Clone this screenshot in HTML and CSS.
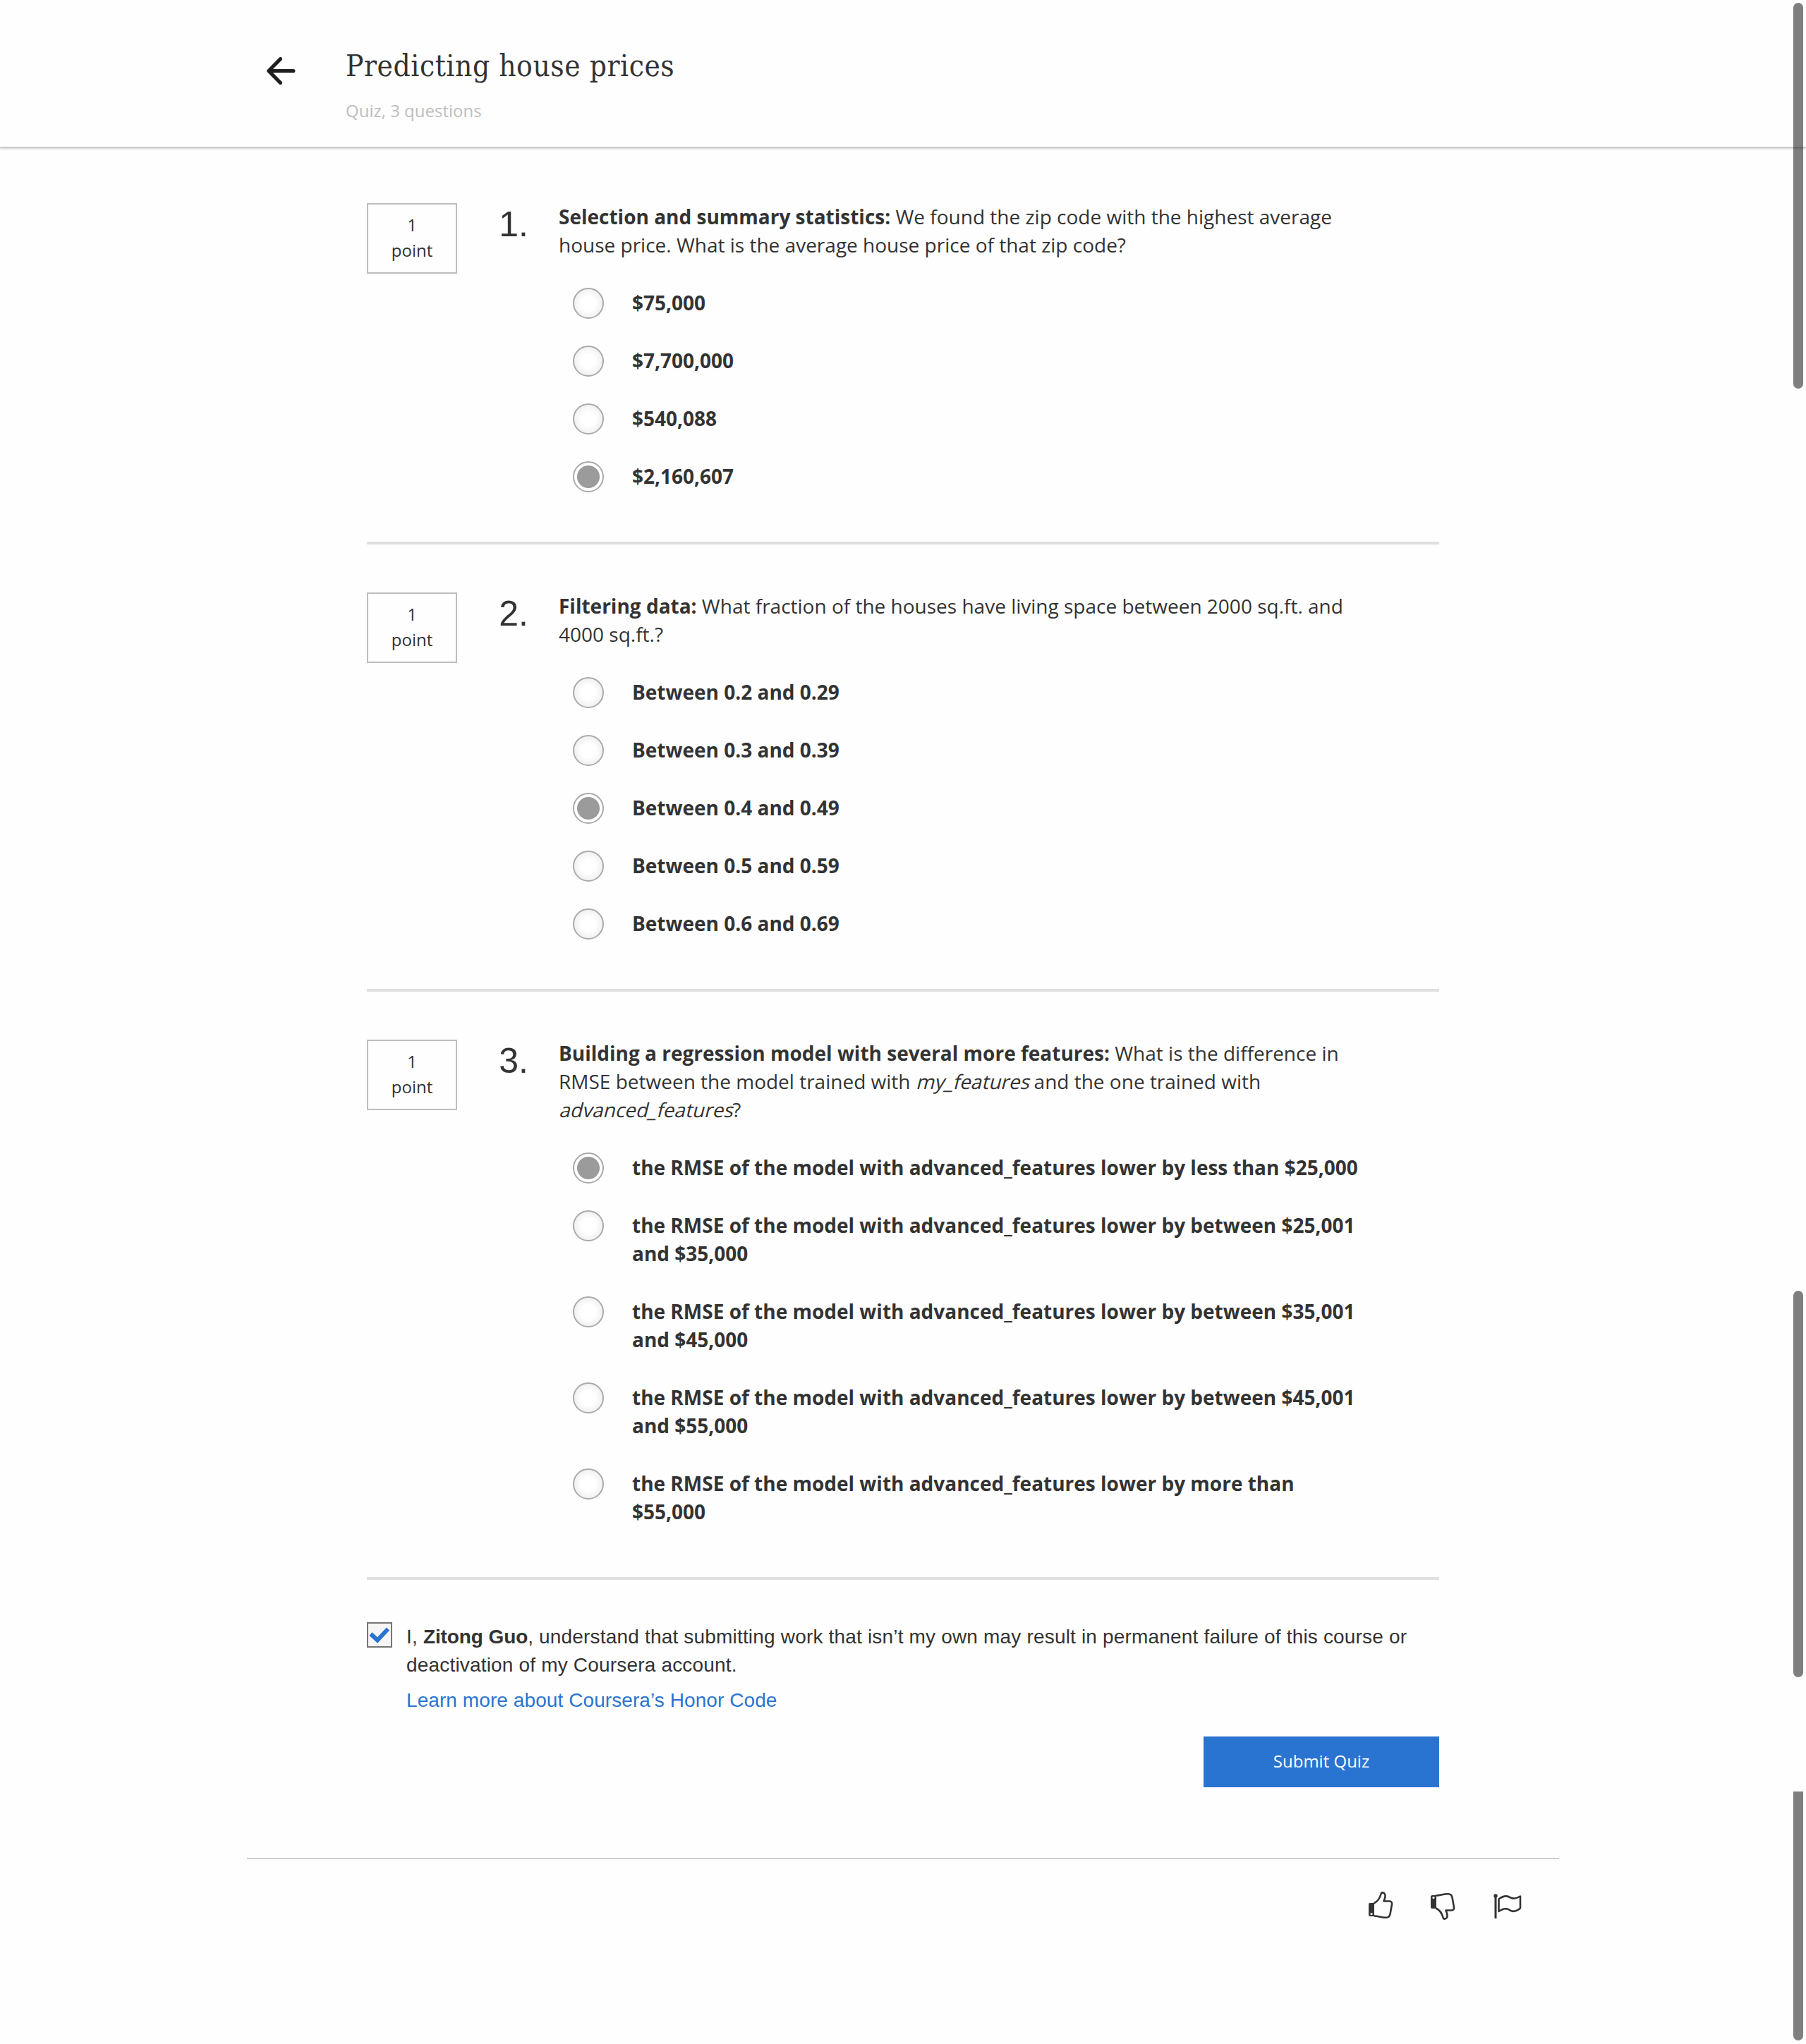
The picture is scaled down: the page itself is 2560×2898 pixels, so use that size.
FILE: index.html
```html
<!DOCTYPE html>
<html lang="en">
<head>
<meta charset="utf-8">
<title>Predicting house prices</title>
<link rel="stylesheet" href="styles.css">
</head>
<body>
<header class="header">
  <svg class="back" viewBox="0 0 40 38" fill="none" stroke="#1f1f1f" stroke-width="5" stroke-linecap="round" stroke-linejoin="round"><path d="M19 2.5 2.8 19 19 35.5M3 19H37"/></svg>
  <div>
    <h1 class="title">Predicting house prices</h1>
    <p class="subtitle">Quiz, 3 questions</p>
  </div>
</header>
<main class="quiz">
  <section class="question">
    <div class="points">1<br>point</div>
    <div class="number">1.</div>
    <div class="body">
      <p class="prompt"><b>Selection and summary statistics:</b> We found the zip code with the highest average<br>house price. What is the average house price of that zip code?</p>
      <ul class="options">
        <li class="option"><span class="radio"></span><span class="label">$75,000</span></li>
        <li class="option"><span class="radio"></span><span class="label">$7,700,000</span></li>
        <li class="option"><span class="radio"></span><span class="label">$540,088</span></li>
        <li class="option"><span class="radio checked"></span><span class="label">$2,160,607</span></li>
      </ul>
    </div>
  </section>
  <section class="question">
    <div class="points">1<br>point</div>
    <div class="number">2.</div>
    <div class="body">
      <p class="prompt"><b>Filtering data:</b> What fraction of the houses have living space between 2000 sq.ft. and<br>4000 sq.ft.?</p>
      <ul class="options">
        <li class="option"><span class="radio"></span><span class="label">Between 0.2 and 0.29</span></li>
        <li class="option"><span class="radio"></span><span class="label">Between 0.3 and 0.39</span></li>
        <li class="option"><span class="radio checked"></span><span class="label">Between 0.4 and 0.49</span></li>
        <li class="option"><span class="radio"></span><span class="label">Between 0.5 and 0.59</span></li>
        <li class="option"><span class="radio"></span><span class="label">Between 0.6 and 0.69</span></li>
      </ul>
    </div>
  </section>
  <section class="question">
    <div class="points">1<br>point</div>
    <div class="number">3.</div>
    <div class="body">
      <p class="prompt"><b>Building a regression model with several more features:</b> What is the difference in<br>RMSE between the model trained with <i>my_features</i> and the one trained with<br><i>advanced_features</i>?</p>
      <ul class="options">
        <li class="option"><span class="radio checked"></span><span class="label">the RMSE of the model with advanced_features lower by less than $25,000</span></li>
        <li class="option"><span class="radio"></span><span class="label">the RMSE of the model with advanced_features lower by between $25,001<br>and $35,000</span></li>
        <li class="option"><span class="radio"></span><span class="label">the RMSE of the model with advanced_features lower by between $35,001<br>and $45,000</span></li>
        <li class="option"><span class="radio"></span><span class="label">the RMSE of the model with advanced_features lower by between $45,001<br>and $55,000</span></li>
        <li class="option"><span class="radio"></span><span class="label">the RMSE of the model with advanced_features lower by more than<br>$55,000</span></li>
      </ul>
    </div>
  </section>
  <section class="honor">
    <span class="checkbox"><svg viewBox="0 0 32 32" fill="none" stroke="#2a74d1" stroke-width="6"><path d="M3.5 14.5 13 23.500 28 7.500"/></svg></span>
    <div class="pledge">
      <p>I, <b>Zitong Guo</b>, understand that submitting work that isn’t my own may result in permanent failure of this course or<br>deactivation of my Coursera account.</p>
      <a class="link">Learn more about Coursera’s Honor Code</a>
    </div>
  </section>
  <button class="submit">Submit Quiz</button>
</main>
<footer class="footer">
  <svg class="icon" viewBox="0 0 40 40"><use href="#thumb"/></svg>
  <svg class="icon down" viewBox="0 0 40 40"><g id="thumb"><path d="M10 18H4Q2 18 2 20V34.500Q2 37 4.500 37H10Z" fill="#333"/><circle cx="6" cy="33.500" r="1.600" fill="#fff"/><path d="M9.500 18.500C15 16 18 11 19.500 5.500C20 3 22 2.800 24 4.200C27 6.500 25.500 11 23.500 15.500H31.500Q35.500 15.800 35 20L32.500 34Q31.500 38.500 27 38.700C20 39 17 36.500 9.500 36.500" fill="none" stroke="#333" stroke-width="2.600" stroke-linejoin="round"/></g></svg>
  <svg class="icon flag" viewBox="0 0 40 40" fill="none" stroke="#333" stroke-width="3"><circle cx="3" cy="5" r="2.700" fill="#333" stroke="none"/><path d="M3 5V37"/><path d="M7.500 9.500Q17 2.500 24 7.500Q30 10.500 38 5.500V22.500Q29 30 22 24.500Q16 21 7.500 27Z" stroke-width="2.600" stroke-linejoin="round"/></svg>
</footer>
<div class="scroll first"></div>
<div class="scroll second"></div>
<div class="scroll third"></div>
</body>
</html>
```
FILE: styles.css
```css
* { box-sizing: border-box; }
body {
  margin: 0;
  position: relative;
  width: 2560px;
  height: 2898px;
  overflow: hidden;
  background: #fefefe;
  color: #333;
  font-family: "Open Sans", sans-serif;
  font-size: 28px;
  line-height: 40px;
}
p, h1, ul { margin: 0; padding: 0; }
.header {
  display: flex;
  height: 208px;
  padding: 60px 0 0 378px;
  box-shadow: 0 2px 0 #ccc, 0 3px 3px rgba(0, 0, 0, .2);
}
.back { width: 41px; height: 39px; margin: 21px 71px 0 0; }
.title {
  font: 400 42px/68px "DejaVu Serif Condensed", "DejaVu Serif", serif;
  font-stretch: condensed;
  letter-spacing: .56px;
}
.subtitle { margin-top: 11px; font-size: 24px; line-height: 36px; color: #bdbdbd; }
.quiz { width: 1520px; margin: 0 auto; }
.question {
  display: flex;
  padding: 80px 0 70px;
  border-bottom: 4px solid #e0e0e0;
}
.question + .question { padding-top: 68px; }
.points {
  width: 128px;
  height: 100px;
  padding-top: 11px;
  border: 2px solid #bdbdbd;
  font-size: 24px;
  line-height: 36px;
  text-align: center;
}
.number {
  width: 101px;
  padding-top: 2px;
  font: 50px/56px "Liberation Sans", Arial, sans-serif;
  text-align: right;
}
.body { margin-left: 43px; white-space: nowrap; }
.prompt { margin-top: -1px; }
/* Slanted upright face, pivoting on the baseline */
.prompt i {
  display: inline-block;
  font-style: normal;
  transform: skewX(-14deg);
  transform-origin: 0 31px;
}
.options { list-style: none; margin-top: 41px; padding-left: 20px; display: grid; gap: 38px; }
.option { display: flex; gap: 40px; font-weight: 700; }
.radio {
  width: 44px;
  height: 44px;
  border: 2px solid #aaa;
  border-radius: 50%;
  background: radial-gradient(circle, #fff 35%, #f2f2f2 68%);
}
.radio.checked { background: radial-gradient(circle, #9b9b9b 15.500px, #fff 16.500px); }
.label { padding: 1px 0 3px; }
.honor {
  display: flex;
  gap: 20px;
  padding-top: 60px;
  font-family: "Liberation Sans", Arial, sans-serif;
  white-space: nowrap;
}
.checkbox { width: 36px; height: 36px; border: 2px solid #757575; background: #f5f5f5; }
.checkbox svg { display: block; }
.pledge { padding-top: 1px; letter-spacing: .18px; }
.pledge b { letter-spacing: -.1px; }
.link { display: block; margin-top: 10px; color: #2a74d1; letter-spacing: .08px; }
.submit {
  display: block;
  width: 334px;
  height: 72px;
  margin: 31px 0 0 auto;
  padding: 0 0 2px;
  border: 0;
  background: #2a74d1;
  color: #fff;
  font: 24px/36px "Open Sans", sans-serif;
}
.footer {
  display: flex;
  justify-content: flex-end;
  width: 1860px;
  margin: 100px 0 0 350px;
  padding: 44px 53px 0 0;
  border-top: 2px solid #ccc;
}
.icon { width: 40px; height: 40px; margin-right: 48px; }
.down { transform: scaleY(-1); margin: 4px 51px 0 0; }
.flag { margin: 3px 0 0; }
.scroll { position: absolute; left: 2542px; width: 14px; border-radius: 7px; background: rgba(0, 0, 0, .5); }
.first { top: 4px; height: 547px; }
.second { top: 1830px; height: 548px; }
.third { top: 2540px; height: 353px; border-radius: 0 0 7px 7px; }
```
